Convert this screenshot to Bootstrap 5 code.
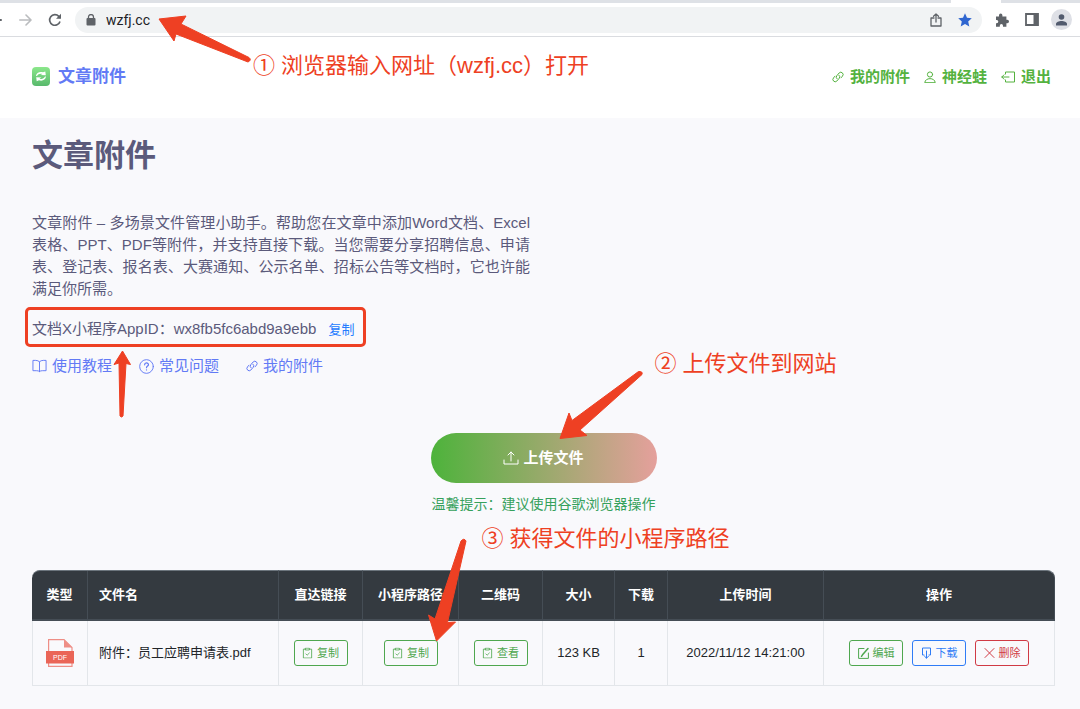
<!DOCTYPE html>
<html lang="zh-CN">
<head>
<meta charset="utf-8">
<meta name="viewport" content="width=device-width, initial-scale=1">
<title>文章附件</title>
<link href="https://cdn.jsdelivr.net/npm/bootstrap@5.3.0/dist/css/bootstrap.min.css" rel="stylesheet">
<style>
  body { font-family: "Liberation Sans", "Noto Sans CJK SC", sans-serif; font-size: 15px; line-height: 22px; background: #f9f9fc; color: #212529; }
  svg { display: block; flex: none; }
  a { text-decoration: none; }
  .ico { fill: none; stroke: currentColor; stroke-width: 1; stroke-linecap: round; stroke-linejoin: round; }
  /* browser toolbar */
  .tabstrip { height: 3px; background: #dee1e6; }
  .tab-open { width: 50px; height: 3px; margin-right: 79px; background: #fff; }
  .toolbar { height: 34px; border-bottom: 1px solid #dadce0; color: #5f6368; }
  .omnibox { height: 26px; border-radius: 13px; background: #f1f3f4; padding: 0 10px 0 11px; margin: 0 13px; }
  .omnibox input { border: 0; background: none; outline: 0; padding: 0; margin-left: 10px; font-family: Roboto, sans-serif; font-size: 14px; line-height: 20px; color: #202124; min-width: 0; }
  .toolbar button { border: 0; background: none; padding: 0; color: inherit; }
  .back { width: 3px; overflow: hidden; }
  .toolbar .me { width: 21px; height: 21px; margin: 0 8px 0 12px; background: #dee0e6; border-radius: 50%; color: #525b6e; }
  /* site header */
  .site-head { height: 81px; padding: 0 29px 2px 32px; }
  .brand-name { font-size: 17px; font-weight: 700; color: #627af5; }
  .site-nav { gap: 14px; }
  .site-nav a { color: #54b23f; font-weight: 700; gap: 6px; }
  /* page */
  .page { padding: 17px 25px 24px 32px; }
  h1 { font-size: 31px; line-height: 42px; font-weight: 700; color: #5b5a7b; margin: 0 0 35px; }
  .intro { max-width: 498px; color: #5b5a7b; text-align: justify; margin-bottom: 7px; }
  .appid { border: 3px solid #ee4023; border-radius: 5px; margin-left: -7px; padding: 8px 8px 3px 4px; color: #5b5a7b; width: fit-content; }
  .appid button { border: 0; background: none; padding: 0; margin-left: 8px; font-size: 13px; color: #247cff; }
  .help a { color: #627af5; gap: 5px; }
  .help { gap: 27px; }
  .upload { width: 226px; height: 50px; border: 0; border-radius: 25px; color: #fff; font-weight: 700; background: linear-gradient(90deg, #4db33b, #e5a09c); }
  .hint { font-size: 14px; line-height: 20px; margin: 11px 0 0; color: #36a15c; }
  /* file list */
  .files { table-layout: fixed; border-collapse: separate; border-spacing: 0; width: 100%; margin-top: 56px; font-size: 13px; line-height: 20px; text-align: center; }
  .files th { height: 51px; background: #343a40; color: #fff; font-weight: 700; border-top: 1px solid #6c757d; border-right: 1px solid #454d55; border-bottom: 2px solid #454d55; white-space: nowrap; }
  .files td { height: 65px; border-right: 1px solid #e3e6ea; border-bottom: 1px solid #e3e6ea; }
  .files td:first-child { border-left: 1px solid #e3e6ea; }
  .files th:first-child { border-top-left-radius: 8px; }
  .files th:last-child { border-top-right-radius: 8px; }
  .files .name { text-align: left; padding-left: 11px; }
  .c-type { width: 56px; } .c-link, .c-code { width: 84px; } .c-path { width: 96px; }
  .c-size { width: 72px; } .c-count { width: 53px; } .c-time { width: 156px; } .c-ops { width: 231px; }
  .act { display: inline-flex; align-items: center; justify-content: center; gap: 4px; width: 54px; height: 26px; padding: 0; border: 1px solid; border-radius: 3px; background: none; font-size: 11px; line-height: 16px; vertical-align: middle; }
  .act-green { color: #4fa74f; } .act-blue { color: #2f7cf6; } .act-red { color: #d03a45; }
  /* tutorial marks lying over the page */
  .note { position: absolute; font-size: 22px; line-height: 32px; color: #ee4023; white-space: nowrap; pointer-events: none; z-index: 3; }
  .arrow { position: absolute; fill: #ee4023; stroke: #ee4023; stroke-width: 1; stroke-linejoin: round; pointer-events: none; z-index: 3; }
  .note-1 { left: 253px; top: 50px; } .arrow-1 { left: 155px; top: 12px; }
  .arrow-2 { left: 83px; top: 39px; }
  .note-2 { left: 224px; top: -85px; } .arrow-3 { left: 125px; top: -66px; }
  .note-3 { left: 51px; top: 90px; } .arrow-4 { left: 40px; bottom: 21px; }
</style>
</head>
<body>
<svg class="d-none" aria-hidden="true">
  <symbol id="i-link" viewBox="0 0 12 12"><path d="M5 7.800a2.200 2.200 0 0 1-.2-3.100L7.200 1.900a2.300 2.300 0 0 1 3.300 3.200L9 6.800M7 4.200a2.200 2.200 0 0 1 .2 3.100L4.800 10.100a2.300 2.300 0 0 1-3.300-3.200L3 5.200"/></symbol>
  <symbol id="i-clip" viewBox="0 0 12 12"><path d="M4 1.800H1.500v9.700h9V1.800H8M4 .7h4v2H4zM4.200 7l1.400 1.400L8 6" stroke-width=".9"/></symbol>
</svg>

<div class="position-relative bg-white">
  <div class="tabstrip d-flex justify-content-end"><div class="tab-open"></div></div>
  <div class="toolbar d-flex align-items-center">
    <button class="back" aria-label="后退"><svg class="ico" width="3" height="16"><path d="M-6 8H1" stroke-width="2"/></svg></button>
    <button class="ms-3" aria-label="前进"><svg class="ico" width="13" height="14" style="color:#babcbe"><path d="M.8 7h11M7 2l5 5-5 5" stroke-width="1.600"/></svg></button>
    <button class="ms-3" aria-label="刷新"><svg width="14" height="14" viewBox="0 0 14 14" fill="none" stroke="currentColor" stroke-width="1.700"><path d="M12 8.500A5.300 5.300 0 1 1 10.800 3.300L12.500 5"/><path d="M13 .8v5H8z" fill="currentColor" stroke="none"/></svg></button>
    <div class="omnibox d-flex align-items-center flex-grow-1">
      <svg width="10" height="12" viewBox="0 0 10 12"><rect x=".5" y="4" width="9" height="7.500" rx="1" fill="#5f6368"/><path d="M2.500 5V3a2.500 2.500 0 0 1 5 0v2" fill="none" stroke="#5f6368" stroke-width="1.300"/></svg>
      <input class="flex-grow-1" type="text" value="wzfj.cc" aria-label="网址">
      <button aria-label="分享"><svg class="ico" width="12" height="14" viewBox="0 0 12 14"><path d="M4 5H1v8h10V5H8M6 9V1M3.500 3.300 6 1l2.500 2.300" stroke-width="1.300"/></svg></button>
      <button class="ms-3" aria-label="收藏"><svg width="14" height="14" viewBox="0 0 14 14" fill="#2f66d0"><path d="m7 .3 2 4.500 4.800.5-3.600 3.200 1.100 4.900L7 10.900l-4.300 2.500 1.100-4.900L.2 5.300 5 4.800z"/></svg></button>
    </div>
    <button aria-label="扩展"><svg width="14" height="14" viewBox="0 0 14 14" fill="currentColor"><path d="M1 3.500h3V2.200a1.700 1.700 0 0 1 3.400 0v1.300h4v3.300h.9a1.700 1.700 0 0 1 0 3.400h-.9v3.500H8v-1a1.600 1.600 0 0 0-3.200 0v1H1v-3.500h.7a1.600 1.600 0 0 0 0-3.200H1z"/></svg></button>
    <button class="ms-3" aria-label="侧边栏"><svg width="14" height="13" viewBox="0 0 14 13"><path d="M1 1h12v11H1z" fill="none" stroke="currentColor" stroke-width="1.800"/><path d="M8.500 1H13v11H8.500z" fill="currentColor"/></svg></button>
    <button class="me flex-shrink-0" aria-label="用户"><svg class="mx-auto" width="11" height="12" viewBox="0 0 11 12" fill="currentColor"><circle cx="5.500" cy="3" r="2.800"/><path d="M0 11.500V10c0-2 3-3 5.500-3S11 8 11 10v1.500z"/></svg></button>
  </div>

  <header class="site-head d-flex align-items-center justify-content-between">
    <a href="#" class="d-flex align-items-center gap-2">
      <svg width="18" height="19" viewBox="0 0 18 19"><defs><linearGradient id="g" x2="0" y2="1"><stop stop-color="#8be78b"/><stop offset="1" stop-color="#58b96c"/></linearGradient></defs><rect width="18" height="19" rx="4" fill="url(#g)"/><path d="M4 9C4.300 5.500 8 4.300 11 5.300l2.300-.9.500 3.900-5.300-.3 2-1.100C8 6.300 6 7 5 9zM14 9.600c-.3 3.500-4 4.700-7 3.700l-2.300.9-.5-3.900 5.300.3-2 1.100c2.500.6 4.500-.1 5.500-2.100z" fill="#fff"/></svg>
      <span class="brand-name">文章附件</span>
    </a>
    <nav class="site-nav d-flex">
      <a href="#" class="d-flex align-items-center"><svg class="ico" width="12" height="12"><use href="#i-link"/></svg>我的附件</a>
      <a href="#" class="d-flex align-items-center"><svg class="ico" width="12" height="12"><circle cx="6" cy="3.500" r="2.600"/><path d="M.8 11.300c.2-5 10.200-5 10.400 0z"/></svg>神经蛙</a>
      <a href="#" class="d-flex align-items-center"><svg class="ico" width="14" height="12"><path d="M4.500 3V1h9v10h-9V9M.8 6H8M3 3.800.8 6 3 8.200"/></svg>退出</a>
    </nav>
  </header>
  <svg class="arrow arrow-1" width="100" height="54" viewBox="155 12 100 54"><path d="M159 19 186 16 181 24 249 57.500Q252 60 248 62L176 34 174 41Z"/></svg>
  <div class="note note-1">① 浏览器输入网址（wzfj.cc）打开</div>
</div>

<main class="page">
  <h1>文章附件</h1>
  <p class="intro">文章附件 – 多场景文件管理小助手。帮助您在文章中添加Word文档、Excel表格、PPT、PDF等附件，并支持直接下载。当您需要分享招聘信息、申请表、登记表、报名表、大赛通知、公示名单、招标公告等文档时，它也许能满足你所需。</p>
  <div class="appid position-relative">文档X小程序AppID：wx8fb5fc6abd9a9ebb <button>复制</button>
    <svg class="arrow arrow-2" width="24" height="72" viewBox="111 349 24 72"><path d="M122.500 351 130.500 364.500 126 363.500 123 416Q121.500 418 120 416L119 363 114 364.500Z"/></svg>
  </div>
  <div class="help d-flex mt-2">
    <a href="#" class="d-flex align-items-center"><svg class="ico" width="15" height="14" viewBox="0 0 16 14"><path d="M8 2.500Q6.500 1 4 1H1v11h4q2 0 3 1 1-1 3-1h4V1h-3Q9.500 1 8 2.500V13"/></svg>使用教程</a>
    <a href="#" class="d-flex align-items-center"><svg class="ico" width="15" height="15" viewBox="0 0 16 16"><circle cx="8" cy="8" r="7.300"/><path d="M6 6.200c0-2.600 4.100-2.600 4.100-.1C10.100 7.500 8 7.500 8 9.300M8 11.500v.2" stroke-width="1.300"/></svg>常见问题</a>
    <a href="#" class="d-flex align-items-center"><svg class="ico" width="12" height="12"><use href="#i-link"/></svg>我的附件</a>
  </div>

  <div class="d-flex flex-column align-items-center mt-5 pt-2">
    <div class="position-relative">
      <button class="upload d-flex align-items-center justify-content-center gap-1"><svg class="ico" width="16" height="14"><path d="M1 9v4h14V9M8 10V1M5 4l3-3 3 3"/></svg>上传文件</button>
      <svg class="arrow arrow-3" width="90" height="74" viewBox="556 367 90 74"><path d="M560 438.500 569 413 572 420.500 638.500 371.500Q643 371 642 374.500L580 430 587 435.500Z"/></svg>
      <div class="note note-2">② 上传文件到网站</div>
      <div class="note note-3">③ 获得文件的小程序路径</div>
    </div>
    <p class="hint">温馨提示：建议使用谷歌浏览器操作</p>
  </div>

  <table class="files">
    <colgroup><col class="c-type"><col><col class="c-link"><col class="c-path"><col class="c-code"><col class="c-size"><col class="c-count"><col class="c-time"><col class="c-ops"></colgroup>
    <thead><tr><th>类型</th><th class="name">文件名</th><th>直达链接</th><th>小程序路径</th><th>二维码</th><th>大小</th><th>下载</th><th>上传时间</th><th>操作</th></tr></thead>
    <tbody><tr>
      <td><svg class="mx-auto" width="28" height="28" viewBox="0 0 28 28"><path d="M2.600 12V.6H18l8 7.900V27.400H2.600V23" fill="none" stroke="#ee8e86" stroke-width="1.200"/><path d="M18 .5v8h8z" fill="#ee8e86"/><path d="M0 12h28v12.500H0z" fill="#ea6557"/><text x="14" y="21" text-anchor="middle" font-size="7" fill="#fff">PDF</text></svg></td>
      <td class="name">附件：员工应聘申请表.pdf</td>
      <td><button class="act act-green"><svg class="ico" width="11" height="12" viewBox="0 0 12 12"><use href="#i-clip"/></svg>复制</button></td>
      <td><span class="position-relative d-inline-block"><button class="act act-green"><svg class="ico" width="11" height="12" viewBox="0 0 12 12"><use href="#i-clip"/></svg>复制</button><svg class="arrow arrow-4" width="46" height="108" viewBox="424 537 46 108"><path d="M436.500 641 428.500 615 435 619 461 541Q464 537.500 466 541L447.500 622.500 455.500 622Z"/></svg></span></td>
      <td><button class="act act-green"><svg class="ico" width="11" height="12" viewBox="0 0 12 12"><use href="#i-clip"/></svg>查看</button></td>
      <td>123 KB</td><td>1</td><td>2022/11/12 14:21:00</td>
      <td><div class="d-flex justify-content-center" style="gap:9px">
        <button class="act act-green"><svg class="ico" width="11" height="12" viewBox="0 0 11 12"><path d="M6 1.500H.6v9.900h9.800V6"/><path d="M10 1.500 4.500 7.800l-1 1.500" stroke-width="1.500"/></svg>编辑</button>
        <button class="act act-blue"><svg class="ico" width="11" height="12" viewBox="0 0 11 12"><path d="M3 8H1.500V1h8v7H8M5.500 4v7M3.500 9.200l2 2 2-2"/></svg>下载</button>
        <button class="act act-red"><svg class="ico" width="11" height="12" viewBox="0 0 11 12"><path d="m1 1.500 9 9M10 1.500l-9 9"/></svg>删除</button>
      </div></td>
    </tr></tbody>
  </table>
</main>
<script src="https://cdn.jsdelivr.net/npm/bootstrap@5.3.0/dist/js/bootstrap.bundle.min.js"></script>
</body>
</html>
